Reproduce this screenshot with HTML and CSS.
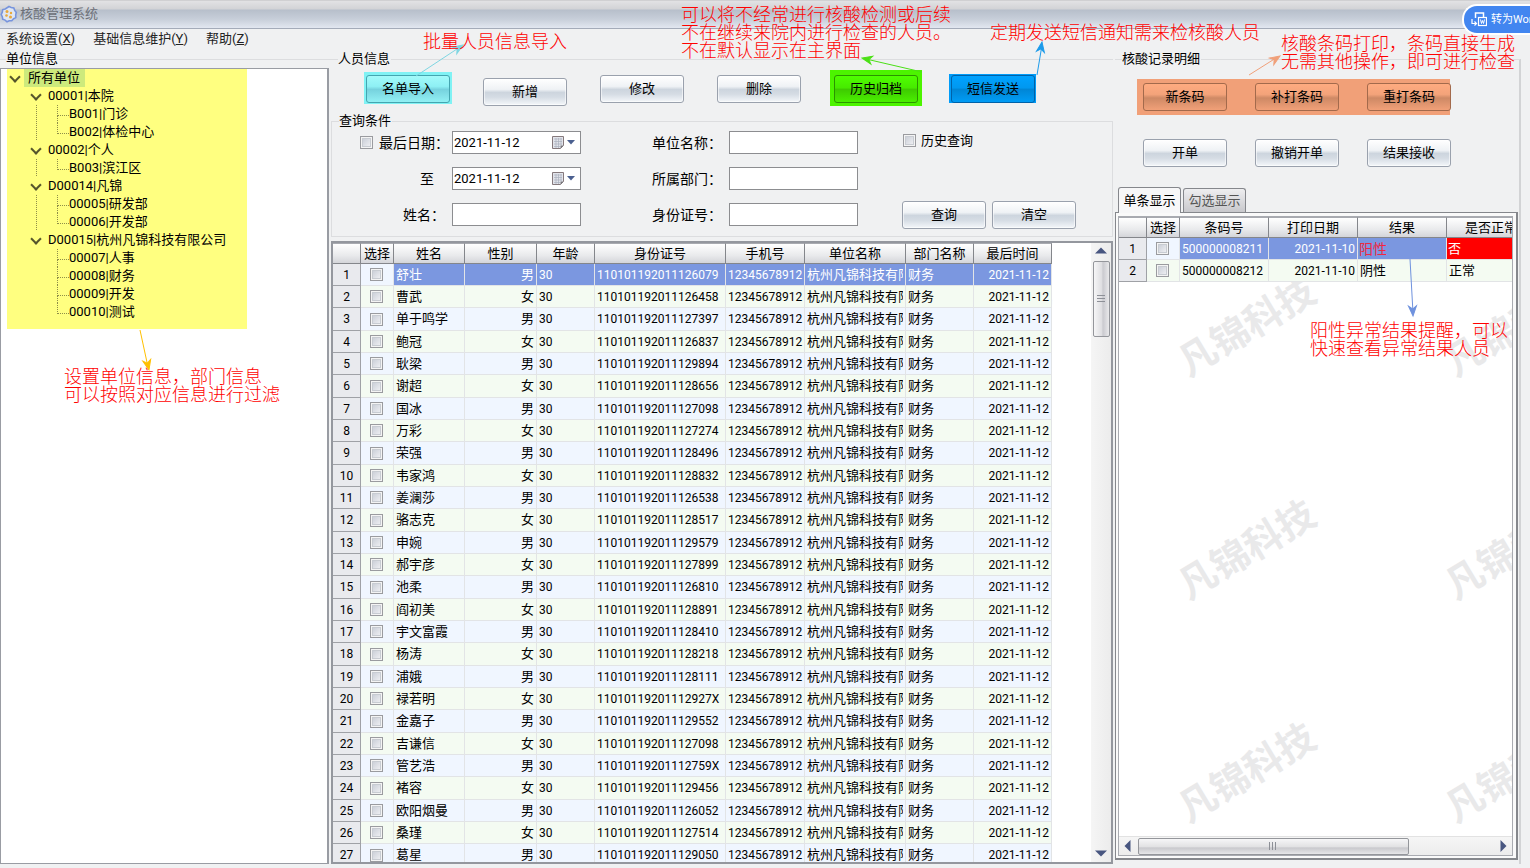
FILE: index.html
```html
<!DOCTYPE html>
<html lang="zh-CN">
<head>
<meta charset="utf-8">
<title>核酸管理系统</title>
<link rel="stylesheet" href="styles.css">
</head>
<body>
<header class="titlebar">
  <svg class="app-icon" width="18" height="18" viewBox="0 0 18 18">
    <path d="M9 1.5l2.2 1 2.6.5.9 2.4 1.6 2-.6 2.5.1 2.6-2.3 1.3-1.7 2-2.6-.1L7 16.8l-1.9-1.7-2.4-.9-.4-2.5L1.200 9.500l1.100-2.300.4-2.600 2.500-.7z" fill="#dfe6f2" stroke="#7794dd" stroke-width="1.600"/>
    <circle cx="7" cy="6.500" r="1.500" fill="#e9a93b"/><circle cx="11" cy="8" r="1.200" fill="#e9a93b"/><circle cx="6.500" cy="10.500" r="1.300" fill="#e9a93b"/><circle cx="10.500" cy="12" r="1.500" fill="#e9a93b"/>
  </svg>
  <span>核酸管理系统</span>
</header>
<nav class="menu">
  <a href="#">系统设置(<u>X</u>)</a>
  <a href="#">基础信息维护(<u>Y</u>)</a>
  <a href="#">帮助(<u>Z</u>)</a>
</nav>

<main class="panes">
  <fieldset class="pane units">
    <legend>单位信息</legend>
    <div class="tree-box">
      <ul class="tree">
        <li class="lv0 open"><span class="picked">所有单位</span></li>
        <li class="lv1 open">00001|本院</li>
        <li class="lv2 rail">B001|门诊</li>
        <li class="lv2 rail last">B002|体检中心</li>
        <li class="lv1 open">00002|个人</li>
        <li class="lv2 rail last">B003|滨江区</li>
        <li class="lv1 open">D00014|凡锦</li>
        <li class="lv2 rail">00005|研发部</li>
        <li class="lv2 rail last">00006|开发部</li>
        <li class="lv1 open">D00015|杭州凡锦科技有限公司</li>
        <li class="lv2">00007|人事</li>
        <li class="lv2">00008|财务</li>
        <li class="lv2">00009|开发</li>
        <li class="lv2 last">00010|测试</li>
      </ul>
    </div>
  </fieldset>

  <section class="pane people">
    <fieldset class="actions">
      <legend>人员信息</legend>
      <div class="action-row">
        <span class="mark cyan"><button class="btn">名单导入</button></span>
        <button class="btn low">新增</button>
        <button class="btn">修改</button>
        <button class="btn">删除</button>
        <span class="mark green"><button class="btn">历史归档</button></span>
        <span class="mark blue"><button class="btn">短信发送</button></span>
      </div>
    </fieldset>
    <fieldset class="query">
      <legend>查询条件</legend>
      <div class="query-grid">
        <label class="lab since" for="from"><input type="checkbox" class="chk" aria-label="启用日期"><span>最后日期：</span></label>
        <div class="date"><input id="from" type="text" value="2021-11-12"><button class="drop" aria-label="选择日期"><svg width="26" height="16" viewBox="0 0 26 16"><path d="M1.500 1.500h11v9l-3 3h-8z" fill="#e2e4ea" stroke="#85797c"/><path d="M3 4h8M3 6.500h8M3 9h8M3 11.500h6M5 3v10M7.500 3v10M10 3v7" stroke="#aab0bd" stroke-width=".7"/><path d="M9.500 13.500v-3h3z" fill="#77777c"/><path d="M16 5h8l-4 4.500z" fill="#4b6090"/></svg></button></div>
        <label class="lab" for="unit">单位名称：</label>
        <input class="box" id="unit" type="text">
        <label class="hist"><input type="checkbox" class="chk">历史查询</label>

        <label class="lab to" for="till">至</label>
        <div class="date"><input id="till" type="text" value="2021-11-12"><button class="drop" aria-label="选择日期"><svg width="26" height="16" viewBox="0 0 26 16"><path d="M1.500 1.500h11v9l-3 3h-8z" fill="#e2e4ea" stroke="#85797c"/><path d="M3 4h8M3 6.500h8M3 9h8M3 11.500h6M5 3v10M7.500 3v10M10 3v7" stroke="#aab0bd" stroke-width=".7"/><path d="M9.500 13.500v-3h3z" fill="#77777c"/><path d="M16 5h8l-4 4.500z" fill="#4b6090"/></svg></button></div>
        <label class="lab" for="dept">所属部门：</label>
        <input class="box" id="dept" type="text">
        <span></span>

        <label class="lab" for="name">姓名：</label>
        <input class="box" id="name" type="text">
        <label class="lab" for="idno">身份证号：</label>
        <input class="box" id="idno" type="text">
        <div class="go"><button class="btn">查询</button><button class="btn">清空</button></div>
      </div>
    </fieldset>
    <div class="grid-frame">
      <div class="grid-body">
        <span class="wm m1">凡锦科技</span><span class="wm m2">凡锦科技</span><span class="wm m3">凡锦科技</span>
        <table class="grid main-grid">
          <colgroup><col class="w28"><col class="w33"><col class="w71"><col class="w72"><col class="w58"><col class="w131"><col class="w79"><col class="w101"><col class="w68"><col class="w78"></colgroup>
          <thead><tr><th></th><th>选择</th><th>姓名</th><th>性别</th><th>年龄</th><th>身份证号</th><th>手机号</th><th>单位名称</th><th>部门名称</th><th>最后时间</th></tr></thead>
          <tbody id="rows"></tbody>
        </table>
      </div>
      <div class="vbar">
        <svg width="12" height="7" viewBox="0 0 12 7"><path d="M0 6.500h12L6 .5z" fill="#485680"/></svg>
        <div class="vthumb"></div>
        <svg class="down" width="12" height="7" viewBox="0 0 12 7"><path d="M0 .5h12L6 6.500z" fill="#485680"/></svg>
      </div>
    </div>
  </section>

  <fieldset class="pane records">
    <legend>核酸记录明细</legend>
    <div class="btn-row codes"><button class="btn">新条码</button><button class="btn">补打条码</button><button class="btn">重打条码</button></div>
    <div class="btn-row"><button class="btn">开单</button><button class="btn">撤销开单</button><button class="btn">结果接收</button></div>
    <div class="tabs"><button class="tab on">单条显示</button><button class="tab">勾选显示</button></div>
    <div class="tab-panel">
      <div class="rec-box">
        <div class="rec-body">
          <span class="wm r1">凡锦科技</span><span class="wm r2">凡锦科技</span><span class="wm r3">凡锦科技</span>
          <span class="wm s1">凡锦科技</span><span class="wm s2">凡锦科技</span><span class="wm s3">凡锦科技</span>
          <table class="grid rec-grid">
            <colgroup><col class="w28"><col class="w33"><col class="w89"><col class="w89"><col class="w89"><col class="w89"></colgroup>
            <thead><tr><th></th><th>选择</th><th>条码号</th><th>打印日期</th><th>结果</th><th>是否正常</th></tr></thead>
            <tbody>
              <tr class="sel"><th>1</th><td class="c"><input type="checkbox" class="chk" aria-label="选择 1"></td><td class="n">500000008211</td><td class="n r">2021-11-10</td><td class="pos">阳性</td><td class="bad">否</td></tr>
              <tr><th>2</th><td class="c"><input type="checkbox" class="chk" aria-label="选择 2"></td><td class="n">500000008212</td><td class="n r">2021-11-10</td><td>阴性</td><td>正常</td></tr>
            </tbody>
          </table>
        </div>
        <div class="hbar">
          <svg width="7" height="12" viewBox="0 0 7 12"><path d="M6.500 0v12L.5 6z" fill="#485680"/></svg>
          <div class="hthumb"></div>
          <svg class="right" width="7" height="12" viewBox="0 0 7 12"><path d="M.5 0v12l6-6z" fill="#485680"/></svg>
        </div>
      </div>
    </div>
  </fieldset>
</main>

<button class="convert">
  <svg width="16" height="15" viewBox="0 0 16 15" fill="none" stroke="#fff"><path d="M4.500 6V1h8v4" stroke-width="1.500"/><rect x="7.500" y="5.500" width="8" height="8" stroke-width="1.200"/><path d="M9.500 7.500l1 4 1-3 1 3 1-4"/><path d="M1 7v4.500h4M3.500 9.500l2 2-2 2" stroke-width="1.200"/></svg>
  <span>转为Word</span>
</button>

<svg class="arrows" width="1530" height="400" viewBox="0 0 1530 400" fill="none">
  <defs><path id="tip" d="M0 0L-10-4-7 0-10 4z" fill="currentColor"/></defs>
  <g color="#7fd6e2" stroke="currentColor"><path d="M416 76L460 47"/><use href="#tip" transform="translate(463 45) rotate(-33)"/></g>
  <g color="#4be016" stroke="currentColor"><path d="M922 72L866 59"/><use href="#tip" transform="translate(862 58) rotate(-167)"/></g>
  <g color="#1c9bea" stroke="currentColor"><path d="M1037 75L1042 45"/><use href="#tip" transform="translate(1042 42) rotate(-81)"/></g>
  <g color="#f0a07a" stroke="currentColor"><path d="M1249 75L1276 58"/><use href="#tip" transform="translate(1280 56) rotate(-33)"/></g>
  <g color="#ffc000" stroke="currentColor"><path d="M140 330L148 367"/><use href="#tip" transform="translate(149 370) rotate(77)"/></g>
  <g color="#6f92de" stroke="currentColor"><path d="M1410 259L1413 313"/><use href="#tip" transform="translate(1413 316) rotate(87)"/></g>
</svg>
<p class="note n-import">批量人员信息导入</p>
<p class="note n-archive">可以将不经常进行核酸检测或后续<br>不在继续来院内进行检查的人员。<br>不在默认显示在主界面</p>
<p class="note n-sms">定期发送短信通知需来检核酸人员</p>
<p class="note n-code">核酸条码打印，条码直接生成<br>无需其他操作，即可进行检查</p>
<p class="note n-units">设置单位信息，部门信息<br>可以按照对应信息进行过滤</p>
<p class="note n-result">阳性异常结果提醒，可以<br>快速查看异常结果人员</p>
<script src="rows.js"></script>
</body>
</html>
```
FILE: styles.css
```css
* { box-sizing: border-box; }
body {
  margin: 0;
  height: 100vh;
  overflow: hidden;
  position: relative;
  display: flex;
  flex-direction: column;
  background: #f0f1f2;
  color: #000;
  font: 13px/18px Roboto, "Noto Sans CJK SC", sans-serif;
}
button, input { font: inherit; color: inherit; }
fieldset { margin: 0; padding: 0; min-width: 0; border: 0 solid #dcdddf; }
legend { margin-left: 7px; padding: 0 1px 0 0; line-height: 18px; }

.titlebar {
  flex: none;
  height: 29px;
  display: flex;
  align-items: center;
  gap: 2px;
  padding-bottom: 2px;
  border-top: 1px solid #d0d0d2;
  border-bottom: 1px solid #a4abb9;
  background: linear-gradient(#e2e2e4, #d2d3d6 8px, #b7bfcb 9px, #c7ced9 18px, #e2e7f0);
  color: #6c7078;
}
.menu { flex: none; height: 21px; display: flex; gap: 18px; padding: 1px 6px; }
.menu a { color: #222; text-decoration: none; }

.panes {
  flex: 1;
  min-height: 0;
  display: grid;
  grid-template-columns: 329px 784px minmax(0, 1fr);
  padding-bottom: 4px;
}
.pane { min-height: 0; height: 100%; display: flex; flex-direction: column; }
.units, .records, .actions { border-top-width: 1px; }
.units legend { margin-left: 6px; }

.tree-box { height: 100%; background: #fff; border: 1px solid #999ca3; border-right-width: 2px; }
.units .tree-box { flex: 1; }
.tree {
  list-style: none;
  margin: 0 0 0 6px;
  padding: 0 0 8px;
  width: 240px;
  background: #ffff80;
}
.tree li { position: relative; height: 18px; white-space: nowrap; }
.lv0 { padding-left: 17px; }
.lv1 { padding-left: 41px; }
.lv2 { padding-left: 62px; }
.picked { display: inline-block; background: #cdea7c; padding: 0 5px 0 4px; }
.open::before {
  content: "";
  position: absolute;
  top: 4px;
  left: 4px;
  width: 6px;
  height: 6px;
  border: solid #55552c;
  border-width: 0 2px 2px 0;
  transform: rotate(45deg);
}
.lv1.open::before { left: 25px; }
.lv2::before {
  content: "";
  position: absolute;
  left: 50px;
  top: 0;
  width: 11px;
  height: 10px;
  border: dotted #8e8e48;
  border-width: 0 0 1px 1px;
}
.lv2:not(.last)::after {
  content: "";
  position: absolute;
  left: 50px;
  top: 10px;
  height: 8px;
  border-left: 1px dotted #8e8e48;
}
.rail {
  background: repeating-linear-gradient(#8e8e48 0 1px, transparent 1px 2px) 29px 0 / 1px 18px no-repeat;
}

.btn {
  flex: none;
  width: 84px;
  height: 28px;
  padding: 0;
  border: 1px solid #9aa1ad;
  border-radius: 3px;
  background: linear-gradient(#fff, #eff2f5 40%, #cdd5de 52%, #d5dce4 70%, #f4f7fa);
  box-shadow: inset 0 0 0 1px #ffffff90;
}
.actions { flex: none; }
.actions legend, .query legend { margin-left: 9px; }
.query legend { margin-left: 7px; }
.action-row { display: flex; gap: 33px; height: 44px; padding: 7px 0 0 37px; align-items: flex-start; }
.low { margin-top: 3px; }
.mark { position: relative; display: flex; }
.mark::before { content: ""; position: absolute; }
.mark .btn { position: relative; box-shadow: none; }
.cyan::before { inset: -3px -2px -1px -2px; background: #80f2f4; }
.cyan .btn { border-color: #44a5b0; background: linear-gradient(#a2fafa, #8ef0f4 40%, #76d2de 52%, #92f0f4); }
.green::before { inset: -5px -4px -3px -4px; background: #4cf400; }
.green .btn { border-color: #2b9400; background: linear-gradient(#4eff00, #47ea00 45%, #3ecb00 52%, #4af000); }
.blue::before { inset: -1px -1px 0 -2px; background: #009cf8; }
.blue .btn { border-color: #0062a8; background: linear-gradient(#00a2ff, #0098f0 45%, #0086d6 52%, #009cf5); }

.query { flex: none; border-width: 1px; margin: 0 0 4px 2px; }
.query-grid {
  display: grid;
  grid-template-columns: 113px 129px 134px 129px 1fr;
  grid-auto-rows: 23px;
  gap: 13px 7px;
  align-items: center;
  padding: 1px 0 10px;
}
.lab { display: flex; align-items: center; justify-content: flex-end; gap: 6px; font-size: 14px; white-space: nowrap; }
.since { margin-right: -4px; }
.to { padding-right: 11px; }
.box, .date { width: 100%; height: 23px; border: 1px solid #8c8d90; background: #fff; }
.date { display: flex; align-items: center; padding: 0 3px 0 1px; }
.date input { flex: 1; min-width: 0; border: 0; padding: 0; background: none; }
.drop { border: 0; padding: 0; background: none; display: flex; }
.hist { display: flex; align-items: center; gap: 5px; padding-left: 38px; height: 19px; align-self: start; }
.go { display: flex; gap: 6px; padding-left: 37px; }

.chk {
  appearance: none;
  flex: none;
  width: 13px;
  height: 13px;
  margin: 0;
  border: 1px solid #9a9b9f;
  background: linear-gradient(135deg, #c3c8d2, #f6f6f8);
  box-shadow: inset 0 0 0 1px #f4f4f4, inset 0 0 0 2px #c8ccd2;
}

.grid-frame {
  flex: 1;
  min-height: 0;
  display: flex;
  margin: 0 0 0 2px;
  border: 2px solid #94979e;
  background: #fff;
}
.grid-body { position: relative; flex: 1; min-width: 0; overflow: hidden; }
.grid { position: relative; table-layout: fixed; border-collapse: separate; border-spacing: 0; }
.main-grid { width: 719px; }
.rec-grid { width: 417px; }
.w28 { width: 28px; } .w33 { width: 33px; } .w71 { width: 71px; } .w72 { width: 72px; } .w58 { width: 58px; }
.w131 { width: 131px; } .w79 { width: 79px; } .w101 { width: 101px; } .w68 { width: 68px; } .w78 { width: 78px; } .w89 { width: 89px; }
.grid th, .grid td {
  padding: 0 2px;
  font-weight: 400;
  line-height: 18px;
  white-space: nowrap;
  overflow: hidden;
  border-right: 1px solid #e2e4e6;
  border-bottom: 1px solid #e2e4e6;
}
.grid td { text-align: left; }
.grid tbody tr { height: 22px; background: #f0f6ff; }
.grid tbody tr:nth-child(3n) { height: 23px; }
.grid tbody tr:nth-child(even) { background: #f4fbf2; }
.grid thead tr { height: 21px; }
.grid thead th {
  padding: 0;
  border-color: #84868b;
  border-top: 1px solid #a8aab0;
  background: linear-gradient(#fff, #e9eaec 60%, #d4d5d9);
}
.grid tbody th { background: #e9eaee; border-color: #9fa1a6; font-size: 12px; }
.grid .n { font-size: 12px; }
.grid .r { text-align: right; }
.grid .c { padding: 0 2px 0 0; }
.grid .c .chk { display: block; margin: 0 auto; }
.clip { display: block; width: 96px; overflow: hidden; }
.grid .sel td:not(.c) { background: #7b97e0; color: #fff; }
.grid .sel td.pos:not(.c) { color: #f02840; font-size: 14px; padding-left: 1px; }
.grid .sel td.bad:not(.c) { background: #f00; padding-left: 1px; }

.vbar {
  flex: none;
  width: 20px;
  display: flex;
  flex-direction: column;
  align-items: center;
  padding: 4px 1px 5px;
  background: linear-gradient(90deg, #f5f5f5, #ececec);
}
.vthumb {
  flex: none;
  width: 17px;
  height: 76px;
  margin-top: 7px;
  border: 1px solid #94969b;
  border-radius: 2px;
  background:
    repeating-linear-gradient(#8d9097 0 1px, transparent 1px 3px) center / 8px 9px no-repeat,
    linear-gradient(90deg, #f6f6f7, #dfdfe2 50%, #cacacf 60%, #e9e9eb);
}
.down { margin-top: auto; }

.records { margin-left: 2px; margin-right: 9px; border-right: 2px solid #d2d3d5; }
.btn-row { display: flex; gap: 28px; width: 313px; margin-left: 22px; padding: 4px 0 4px 6px; }
.codes { margin-top: 11px; margin-bottom: 20px; background: #f1a078; }
.codes .btn { border-color: #a36a4c; background: linear-gradient(#ffab80, #f3a37a 40%, #ce8965 54%, #f1a078); box-shadow: none; }
.tabs { display: flex; align-items: flex-end; gap: 2px; padding-left: 3px; margin-top: 16px; }
.tab { border: 1px solid #85878c; border-bottom: 0; border-radius: 3px 3px 0 0; padding: 0; width: 63px; height: 24px; background: linear-gradient(#eeeef0, #c8c8cc); color: #555; }
.tab.on { height: 26px; background: #f7f7f8; color: #000; margin-bottom: -1px; position: relative; }
.records .tab-panel { height: calc(100vh - 220px); }
.tab-panel { margin-right: 1px; border: 1px solid #85878c; border-right-width: 2px; border-bottom-width: 2px; padding: 3px 3px 2px 2px; background: #fafafa; }
.rec-box { height: 100%; display: flex; flex-direction: column; border: 1px solid #a9abb1; background: #fff; }
.rec-body { position: relative; flex: 1; overflow: hidden; }
.hbar {
  flex: none;
  height: 19px;
  display: flex;
  align-items: center;
  padding: 0 5px;
  border-top: 1px solid #e2e2e2;
  background: linear-gradient(#f5f5f5, #ececec);
}
.hthumb {
  width: 271px;
  height: 17px;
  margin-left: 7px;
  border: 1px solid #94969b;
  border-radius: 2px;
  background:
    repeating-linear-gradient(90deg, #8d9097 0 1px, transparent 1px 3px) center / 9px 8px no-repeat,
    linear-gradient(#f6f6f7, #e2e2e4 50%, #c9c9cd 60%, #e6e6e8);
}
.right { margin-left: auto; }

/* Diagonal watermark, tiled 267 x 223 */
.wm {
  position: absolute;
  width: 152px;
  font-size: 38px;
  font-weight: 700;
  line-height: 38px;
  white-space: nowrap;
  color: #e9e9ea;
  transform: rotate(-31deg);
}
.m1, .m2, .m3 { left: 572px; }
.r1, .r2, .r3 { left: 52px; }
.s1, .s2, .s3 { left: 319px; }
.m1 { top: 66px; } .m2 { top: 289px; } .m3 { top: 512px; }
.r1, .s1 { top: 91px; } .r2, .s2 { top: 314px; } .r3, .s3 { top: 537px; }

.convert {
  position: absolute;
  top: 4px;
  right: 0;
  width: 68px;
  height: 31px;
  overflow: hidden;
  display: flex;
  align-items: center;
  gap: 4px;
  padding: 0 0 0 7px;
  border: 2px solid #fff;
  border-right: 0;
  border-radius: 15px 0 0 15px;
  background: #4286f0;
  color: #fff;
  font-size: 11px;
  white-space: nowrap;
}
.convert svg { flex: none; }

.arrows { position: absolute; left: 0; top: 0; pointer-events: none; }
.note {
  position: absolute;
  margin: 0;
  color: #f00;
  font-size: 18px;
  font-weight: 300;
  line-height: 18px;
  white-space: nowrap;
}
.n-import { left: 423px; top: 33px; }
.n-archive { left: 681px; top: 6px; }
.n-sms { left: 990px; top: 24px; }
.n-code { left: 1281px; top: 35px; }
.n-units { left: 64px; top: 368px; }
.n-result { left: 1310px; top: 322px; }
```
FILE: rows.js
```js
const people = [
  ["舒壮", "126079"], ["曹武", "126458"], ["单于鸣学", "127397"], ["鲍冠", "126837"],
  ["耿梁", "129894"], ["谢超", "128656"], ["国冰", "127098"], ["万彩", "127274"],
  ["荣强", "128496"], ["韦家鸿", "128832"], ["姜澜莎", "126538"], ["骆志克", "128517"],
  ["申婉", "129579"], ["郝宇彦", "127899"], ["池柔", "126810"], ["阎初美", "128891"],
  ["宇文富霞", "128410"], ["杨涛", "128218"], ["浦娥", "128111"], ["禄若明", "12927X"],
  ["金嘉子", "129552"], ["吉谦信", "127098"], ["管艺浩", "12759X"], ["褚容", "129456"],
  ["欧阳烟曼", "126052"], ["桑瑾", "127514"], ["葛星", "129050"]
];
document.getElementById("rows").innerHTML = people.map(([name, tail], i) => `
  <tr class="${i === 0 ? "sel" : ""}">
    <th>${i + 1}</th>
    <td class="c"><input type="checkbox" class="chk" aria-label="选择 ${i + 1}"></td>
    <td>${name}</td>
    <td class="r">${i % 2 ? "女" : "男"}</td>
    <td class="n">30</td>
    <td class="n">110101192011${tail}</td>
    <td class="n">12345678912</td>
    <td><span class="clip">杭州凡锦科技有限公司</span></td>
    <td>财务</td>
    <td class="n r">2021-11-12</td>
  </tr>`).join("");
```
